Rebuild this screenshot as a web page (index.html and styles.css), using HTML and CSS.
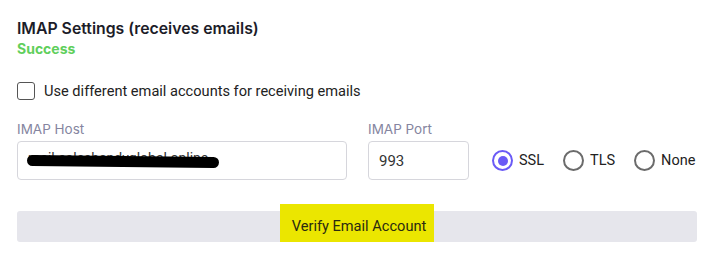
FILE: index.html
```html
<!DOCTYPE html>
<html lang="en">
<head>
    <meta charset="UTF-8">
    <title>IMAP Settings</title>
    <link rel="stylesheet" href="styles.css">
</head>
<body>
    <div class="panel">
        <div class="title">IMAP Settings (receives emails)</div>
        <div class="status">Success</div>

        <label class="check-row">
            <span class="checkbox"></span>
            <span class="check-text">Use different email accounts for receiving emails</span>
        </label>

        <div class="fields">
            <div class="field host">
                <div class="field-label">IMAP Host</div>
                <div class="input">
                    <span class="masked">mail.saleshandyglobal.online</span>
                    <span class="scribble"></span>
                </div>
            </div>
            <div class="field port">
                <div class="field-label">IMAP Port</div>
                <div class="input">993</div>
            </div>
            <div class="radios">
                <div class="radio checked"><span class="dot"></span>SSL</div>
                <div class="radio"><span class="dot"></span>TLS</div>
                <div class="radio"><span class="dot"></span>None</div>
            </div>
        </div>

        <div class="verify">
            <span class="verify-text">Verify Email Account</span>
        </div>
    </div>
</body>
</html>
```
FILE: styles.css
```css
body {
    margin: 0;
    background: #ffffff;
    font-family: Inter, "Noto Sans", sans-serif;
    color: #1f1f2e;
}

.panel {
    padding: 19px 23px 0 17px;
}

.title {
    font-size: 15.8px;
    font-weight: 600;
    line-height: 20px;
    color: #1c1c28;
}

.status {
    font-size: 14px;
    font-weight: 700;
    line-height: 20px;
    color: #5fcf5c;
}

.check-row {
    display: flex;
    align-items: center;
    margin-top: 22px;
    height: 20px;
}

.checkbox {
    width: 16px;
    height: 16px;
    border: 1.5px solid #555;
    border-radius: 3px;
    box-sizing: content-box;
}

.check-text {
    margin-left: 9px;
    font-family: Roboto, "Liberation Sans", sans-serif;
    font-size: 14.6px;
    color: #222;
}

.fields {
    display: flex;
    align-items: flex-end;
    margin-top: 18px;
}

.field-label {
    font-size: 13.5px;
    line-height: 20px;
    color: #8585a0;
    margin-bottom: 2px;
}

.input {
    position: relative;
    height: 39px;
    box-sizing: border-box;
    border: 1px solid #d6d6dc;
    border-radius: 4px;
    padding: 0 10px;
    display: flex;
    align-items: center;
    font-family: Roboto, "Liberation Sans", sans-serif;
    font-size: 15px;
    color: #333;
}

.host .input {
    width: 330px;
}

.port {
    margin-left: 21px;
}

.port .input {
    width: 101px;
}

.masked {
    color: #333;
    font-size: 14px;
    margin-top: -6px;
}

.scribble {
    position: absolute;
    left: 9px;
    top: 14px;
    width: 192px;
    height: 11px;
    background: #000;
    border-radius: 6px;
    transform: rotate(0.6deg);
}

.radios {
    display: flex;
    align-items: center;
    height: 39px;
    margin-left: 23px;
    font-family: Roboto, "Liberation Sans", sans-serif;
    font-size: 14.5px;
    color: #222;
}

.radio {
    display: flex;
    align-items: center;
    margin-right: 19px;
}

.dot {
    width: 17px;
    height: 17px;
    border: 2px solid #6b6b6b;
    border-radius: 50%;
    margin-right: 6px;
    box-sizing: content-box;
    position: relative;
}

.checked .dot {
    border-color: #6a5af6;
}

.checked .dot::after {
    content: "";
    position: absolute;
    left: 3.5px;
    top: 3.5px;
    width: 10px;
    height: 10px;
    border-radius: 50%;
    background: #6a5af6;
}

.verify {
    margin-top: 31px;
    height: 31px;
    background: #e6e6ec;
    border-radius: 3px;
    display: flex;
    justify-content: center;
    align-items: flex-end;
}

.verify-text {
    height: 38px;
    margin-top: -7px;
    padding: 0 8px 0 12px;
    background: #ebe600;
    display: flex;
    align-items: center;
    padding-top: 6px;
    box-sizing: border-box;
    font-family: Roboto, "Liberation Sans", sans-serif;
    font-size: 14.6px;
    color: #2a2a10;
}
```
